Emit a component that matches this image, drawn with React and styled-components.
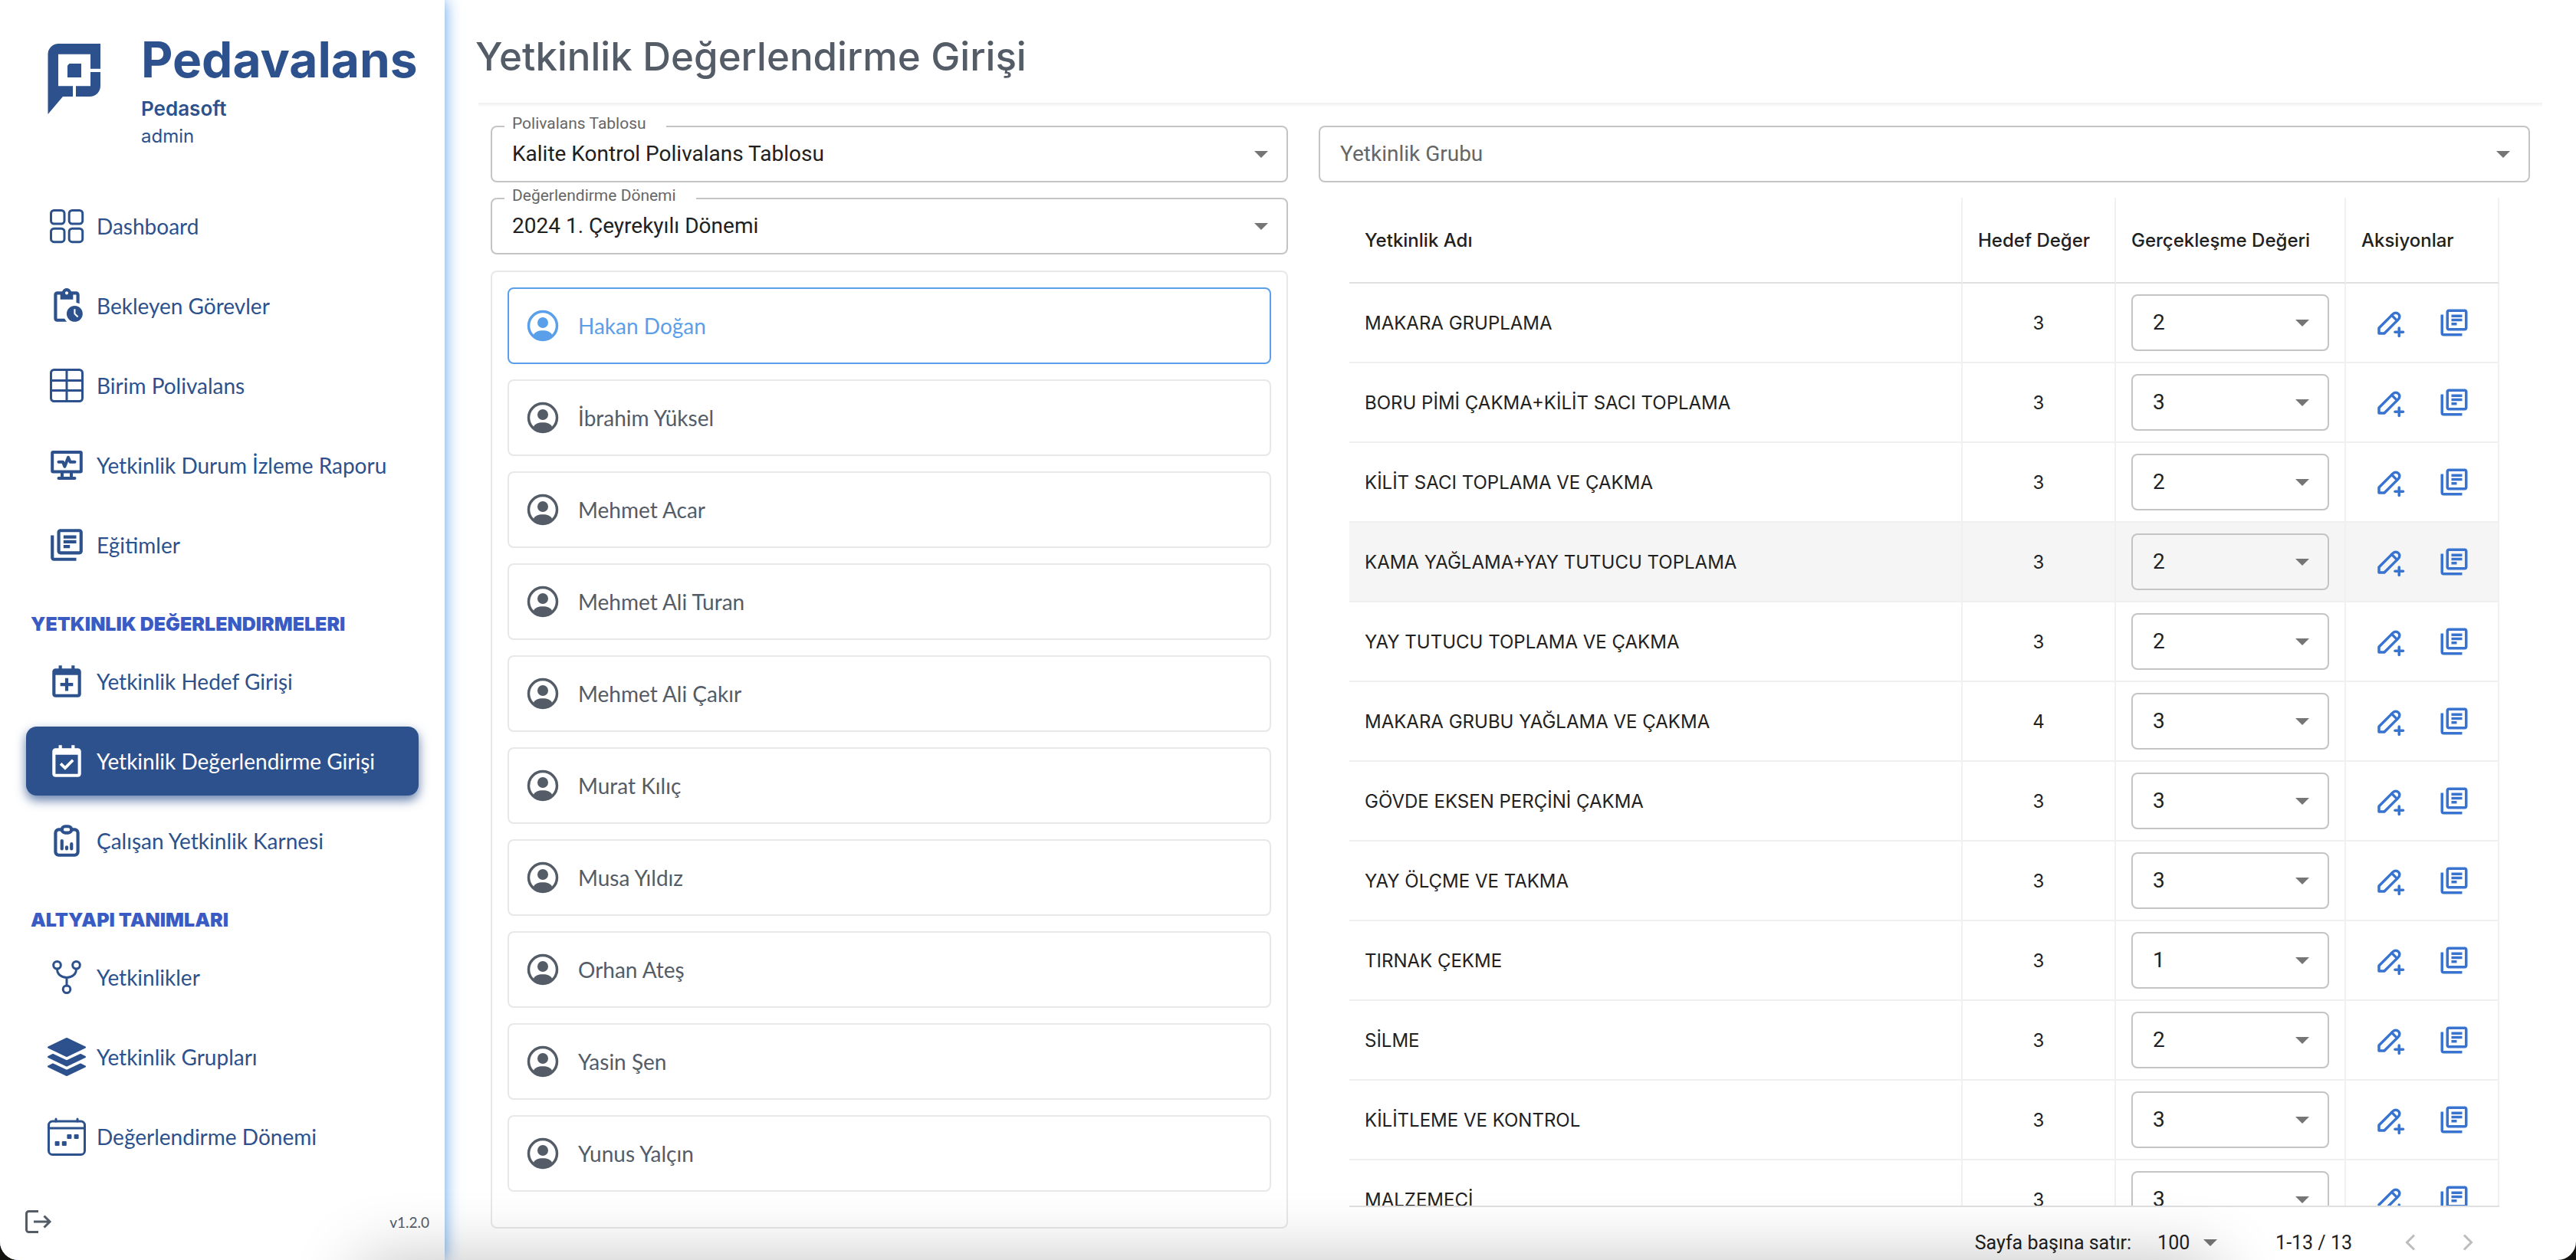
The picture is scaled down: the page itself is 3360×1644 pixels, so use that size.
import React, { useState } from "react";
import styled, { createGlobalStyle, css } from "styled-components";
import { MdPendingActions, MdOutlineLibraryBooks } from "react-icons/md";
import { TbPencilPlus, TbReportAnalytics } from "react-icons/tb";

const color = {
  navy: "#2c518d",
  indigo: "#3a5bc4",
  sky: "#5a9fe9",
  action: "#3874cf",
  slate: "#535c67",
  text: "#212121",
  muted: "#666666",
  outline: "#c4c4c4",
  line: "#e8e8e8",
  cell: "#f0f0f0",
  rule: "#e0e0e0",
};

const font = {
  display: '"Inter", "Liberation Sans", sans-serif',
  nav: '"Lato", "Liberation Sans", sans-serif',
  form: '"Roboto", "Liberation Sans", sans-serif',
};

const GlobalStyle = createGlobalStyle`
  *, *::before, *::after { box-sizing: border-box; }
  body { margin: 0; background: #15130f; }
  button, select { font: inherit; color: inherit; }
  h1, h2, p, ul { margin: 0; padding: 0; }
`;

/* ---------- shell ---------- */

const Shell = styled.div`
  position: relative;
  display: flex;
  height: 100vh;
  overflow: hidden;
  background: #ffffff;
  border-radius: 0 0 24px 24px;
`;

const DockShade = styled.div`
  position: absolute;
  left: 14%;
  right: 14%;
  bottom: -100px;
  height: 100px;
  z-index: 3;
  box-shadow: 0 0 88px rgba(0, 0, 0, 0.24);
  pointer-events: none;
`;

/* ---------- sidebar ---------- */

const Sidebar = styled.aside`
  flex: 0 0 580px;
  z-index: 2;
  display: flex;
  flex-direction: column;
  background: #ffffff;
  color: ${color.navy};
  box-shadow: 0 0 20px ${color.sky};
`;

const Brand = styled.header`
  display: flex;
  gap: 50px;
  height: 250px;
  padding: 40px 20px 0 62px;
  font-family: ${font.display};
`;

const Logo = styled.svg`
  flex: none;
  width: 72px;
  height: 96px;
  margin-top: 16px;
`;

const BrandName = styled.p`
  font-size: 64px;
  line-height: 76px;
  font-weight: 700;
`;

const Company = styled.p`
  margin-top: 8px;
  font-size: 26px;
  line-height: 36px;
  font-weight: 600;
`;

const Role = styled.p`
  font-size: 24px;
  line-height: 36px;
`;

const Nav = styled.nav`
  flex: 1;
  padding: 0 34px;
  font-family: ${font.nav};
`;

const NavList = styled.ul`
  display: flex;
  flex-direction: column;
  gap: 14px;
  list-style: none;
`;

const NavHeading = styled.h2`
  height: 88px;
  padding: 42px 0 0 6px;
  color: ${color.indigo};
  font-family: ${font.display};
  font-size: 25px;
  line-height: 32px;
  font-weight: 900;
  white-space: nowrap;
`;

const NavLink = styled.a`
  display: flex;
  align-items: center;
  gap: 14px;
  height: 90px;
  padding-left: 28px;
  border-radius: 14px;
  color: inherit;
  font-size: 28px;
  text-decoration: none;
  white-space: nowrap;

  svg {
    flex: none;
    width: 50px;
    height: 50px;
  }

  ${(p) =>
    p.$active &&
    css`
      background: ${color.navy};
      color: #ffffff;
      box-shadow: 0 6px 14px rgba(44, 81, 141, 0.75);
    `}
`;

const SidebarFooter = styled.footer`
  display: flex;
  align-items: center;
  justify-content: space-between;
  height: 100px;
  padding: 0 20px 0 32px;
  color: ${color.slate};
  font-family: ${font.nav};
  font-size: 19px;
`;

const IconButton = styled.button`
  display: grid;
  place-items: center;
  width: ${(p) => p.$width || 42}px;
  height: 42px;
  padding: 0;
  border: 0;
  background: none;
  color: ${(p) => p.$color || color.action};
  cursor: pointer;

  svg {
    display: block;
  }
`;

/* ---------- main ---------- */

const Main = styled.main`
  flex: 1;
  min-width: 0;
  display: flex;
  flex-direction: column;
`;

const Title = styled.h1`
  padding: 39px 40px 25px;
  color: ${color.slate};
  font-family: ${font.display};
  font-size: 51px;
  line-height: 70px;
  font-weight: 500;
`;

const Divider = styled.hr`
  flex: none;
  height: 6px;
  margin: 0 44px;
  border: 0;
  background: linear-gradient(#efefef, #ffffff);
`;

const Columns = styled.div`
  flex: 1;
  min-height: 0;
  display: flex;
  padding: 24px 40px 0;
`;

const Column = styled.section`
  flex: 0 0 ${(p) => p.$share}%;
  min-width: 0;
  display: flex;
  flex-direction: column;
  gap: 20px;
  padding: 0 20px;
`;

const Field = styled.div`
  position: relative;
  flex: none;
  display: grid;
  align-items: center;
  font-family: ${font.form};
  color: ${(p) => (p.$placeholder ? color.muted : color.text)};

  > select,
  > svg {
    grid-area: 1 / 1;
  }

  > svg {
    justify-self: end;
    margin-right: ${(p) => (p.$bare ? 0 : 26)}px;
    pointer-events: none;
  }
`;

const Select = styled.select`
  appearance: none;
  width: 100%;
  height: 74px;
  padding: 0 60px 2px 26px;
  border: 2px solid ${color.outline};
  border-radius: 8px;
  background: transparent;
  font-size: 28px;
`;

const BareSelect = styled.select`
  appearance: none;
  width: 78px;
  height: 40px;
  padding: 0;
  border: 0;
  background: transparent;
  font-size: 25px;
`;

const FloatingLabel = styled.label`
  position: absolute;
  top: -16px;
  left: 18px;
  padding: 0 26px 0 10px;
  background: #ffffff;
  color: ${color.muted};
  font-size: 21px;
  line-height: 26px;
`;

const People = styled.ul`
  flex: 1;
  min-height: 0;
  display: flex;
  flex-direction: column;
  gap: 20px;
  margin: 1px 0 41px;
  padding: 20px;
  border: 2px solid ${color.line};
  border-radius: 8px;
  list-style: none;
  overflow: hidden;
`;

const Person = styled.button`
  display: flex;
  align-items: center;
  gap: 22px;
  width: 100%;
  height: 100px;
  padding: 0 20px;
  border: 2px solid ${(p) => (p.$selected ? color.sky : color.line)};
  border-radius: 8px;
  background: #ffffff;
  color: ${(p) => (p.$selected ? color.sky : color.slate)};
  font-family: ${font.nav};
  font-size: 28px;
  text-align: left;
  cursor: pointer;
`;

/* ---------- table ---------- */

const GridArea = styled.div`
  flex: 1;
  min-height: 0;
  display: flex;
  flex-direction: column;
  padding: 0 40px;
`;

const TableScroll = styled.div`
  flex: 1;
  min-height: 0;
  overflow: hidden;
  border-bottom: 2px solid ${color.rule};
`;

const Table = styled.table`
  width: 100%;
  table-layout: fixed;
  border-collapse: separate;
  border-spacing: 0;
  color: ${color.text};
  font-family: ${font.display};
  font-size: 24px;
`;

const Col = styled.col`
  width: ${(p) => p.$width}px;
`;

const HeadCell = styled.th`
  height: 112px;
  padding: 0 20px;
  border-right: 2px solid ${color.cell};
  border-bottom: 2px solid ${color.rule};
  font-weight: 500;
  text-align: left;
  white-space: nowrap;
`;

const Row = styled.tr`
  background: ${(p) => (p.$hovered ? "#f5f5f5" : "transparent")};
`;

const Cell = styled.td`
  height: 104px;
  padding: 0 20px;
  border-right: 2px solid ${color.cell};
  border-bottom: 2px solid ${color.cell};
  text-align: ${(p) => (p.$center ? "center" : "left")};
`;

const Actions = styled.div`
  display: flex;
  justify-content: center;
  gap: 42px;
`;

const Pagination = styled.footer`
  flex: none;
  display: flex;
  align-items: center;
  justify-content: flex-end;
  height: 69px;
  padding: 23px 4px 0 0;
  color: ${color.text};
  font-family: ${font.form};
  font-size: 25px;
`;

const PageSizeLabel = styled.label`
  margin-right: 34px;
`;

const Range = styled.span`
  margin: 0 38px 0 76px;
`;

/* ---------- drawings ---------- */

const Arrow = () => (
  <svg width="18" height="9" viewBox="0 0 18 9" aria-hidden="true">
    <path d="M0 0h18L9 9z" fill="#757575" />
  </svg>
);

const Stroke50 = ({ children, width = 3 }) => (
  <svg viewBox="0 0 50 50" fill="none" stroke="currentColor" strokeWidth={width} strokeLinecap="round" strokeLinejoin="round" aria-hidden="true">
    {children}
  </svg>
);

const TilesIcon = () => (
  <Stroke50>
    <rect x="4.5" y="4.5" width="17.5" height="17.5" rx="4" />
    <rect x="28.2" y="4.5" width="17.5" height="17.5" rx="4" />
    <rect x="4.5" y="28.2" width="17.5" height="17.5" rx="4" />
    <rect x="28.2" y="28.2" width="17.5" height="17.5" rx="4" />
  </Stroke50>
);

const TableIcon = () => (
  <Stroke50>
    <rect x="4.5" y="4.5" width="41" height="41" rx="4" />
    <path d="M25 4.5v41M4.5 18.5h41M4.5 31.5h41" />
  </Stroke50>
);

const MonitorIcon = () => (
  <Stroke50 width={4}>
    <rect x="6.2" y="8" width="37.6" height="25.5" rx="1" />
    <path d="M19 35v6M31 35v6M14.5 42h21M14.5 20.7h5.5l2.4 6 4.6-12 2.5 6h6" />
  </Stroke50>
);

const CalendarIcon = ({ children }) => (
  <svg viewBox="0 0 24 24" fill="currentColor" aria-hidden="true">
    <path
      fillRule="evenodd"
      d="M19 4h-2V2h-2v2H9V2H7v2H5c-1.1 0-2 .9-2 2v14c0 1.1.9 2 2 2h14c1.1 0 2-.9 2-2V6c0-1.1-.9-2-2-2zM19 20H5V8h14z"
    />
    {children}
  </svg>
);

const CalendarPlusIcon = () => (
  <CalendarIcon>
    <path d="M13 10h-2v3H8v2h3v3h2v-3h3v-2h-3z" />
  </CalendarIcon>
);

const CalendarCheckIcon = () => (
  <CalendarIcon>
    <path d="M8.2 13.6l2.8 2.8 4.9-5" fill="none" stroke="currentColor" strokeWidth="1.8" />
  </CalendarIcon>
);

const ForkIcon = () => (
  <Stroke50>
    <circle cx="12.5" cy="9.3" r="4.8" />
    <circle cx="37.5" cy="9.3" r="4.8" />
    <circle cx="25" cy="40.7" r="4.8" />
    <path d="M12.5 14.5C12.5 21 18 25.5 25 25.5S37.5 21 37.5 14.5M25 25.5V36" />
  </Stroke50>
);

const LayersIcon = () => (
  <svg viewBox="0 0 50 50" fill="currentColor" stroke="currentColor" strokeWidth="2" strokeLinejoin="round" aria-hidden="true">
    <path d="M25 1l24 11.5L25 24 1 12.5z" />
    <path d="M1 25l6-3 18 8.5L43 22l6 3-24 11.5z" />
    <path d="M1 37.5l6-3L25 43l18-8.5 6 3L25 49z" />
  </svg>
);

const PeriodIcon = () => (
  <Stroke50>
    <rect x="1.5" y="5" width="47" height="43.5" rx="5" />
    <path d="M1.5 14h47M11 2v3M39 2v3" />
    <g fill="currentColor" stroke="none">
      <rect x="25.4" y="22" width="6" height="6" rx="1" />
      <rect x="34.6" y="22" width="6" height="6" rx="1" />
      <rect x="9.6" y="31" width="6" height="6" rx="1" />
      <rect x="18.8" y="31" width="6" height="6" rx="1" />
    </g>
  </Stroke50>
);

const LogoutIcon = () => (
  <svg width="36" height="36" viewBox="0 0 36 36" fill="none" stroke="currentColor" strokeWidth="3" aria-hidden="true">
    <path d="M18 4.5H5.5a3 3 0 0 0-3 3v21a3 3 0 0 0 3 3H18M12 18h20M25.5 10.5L33 18l-7.5 7.5" />
  </svg>
);

const PersonIcon = () => (
  <svg width="48" height="48" viewBox="0 0 48 48" fill="currentColor" aria-hidden="true">
    <circle cx="24" cy="24" r="18.5" fill="none" stroke="currentColor" strokeWidth="3.5" />
    <circle cx="24" cy="20" r="7" />
    <path d="M11.5 37c1.5-5 6.5-6.7 12.5-6.7S35 32 36.5 37a18 18 0 0 1-25 0z" />
  </svg>
);

const Chevron = ({ right }) => (
  <svg width="14" height="22" viewBox="0 0 14 22" fill="none" stroke="currentColor" strokeWidth="3" aria-hidden="true">
    <path d={right ? "M2 1.5L11.5 11 2 20.5" : "M12 1.5L2.5 11 12 20.5"} />
  </svg>
);

const BrandLogo = () => (
  <Logo viewBox="0 0 72 96" fill="currentColor" aria-hidden="true">
    <path d="M.5 93V15a14 14 0 0 1 14-14H69v32.7H56v-19H14v41.6h19V70H20z" />
    <path d="M69 38v18a14 14 0 0 1-14 14H37V56.3h19V38z" />
    <path d="M28.5 27H44v18H26V29.5z" />
  </Logo>
);

/* ---------- data ---------- */

const navSections = [
  {
    items: [
      { label: "Dashboard", Icon: TilesIcon },
      { label: "Bekleyen Görevler", Icon: MdPendingActions },
      { label: "Birim Polivalans", Icon: TableIcon },
      { label: "Yetkinlik Durum İzleme Raporu", Icon: MonitorIcon },
      { label: "Eğitimler", Icon: MdOutlineLibraryBooks },
    ],
  },
  {
    heading: "YETKINLIK DEĞERLENDIRMELERI",
    items: [
      { label: "Yetkinlik Hedef Girişi", Icon: CalendarPlusIcon },
      { label: "Yetkinlik Değerlendirme Girişi", Icon: CalendarCheckIcon, active: true },
      { label: "Çalışan Yetkinlik Karnesi", Icon: TbReportAnalytics },
    ],
  },
  {
    heading: "ALTYAPI TANIMLARI",
    items: [
      { label: "Yetkinlikler", Icon: ForkIcon },
      { label: "Yetkinlik Grupları", Icon: LayersIcon },
      { label: "Değerlendirme Dönemi", Icon: PeriodIcon },
    ],
  },
];

const people = [
  "Hakan Doğan",
  "İbrahim Yüksel",
  "Mehmet Acar",
  "Mehmet Ali Turan",
  "Mehmet Ali Çakır",
  "Murat Kılıç",
  "Musa Yıldız",
  "Orhan Ateş",
  "Yasin Şen",
  "Yunus Yalçın",
];

const skills = [
  ["MAKARA GRUPLAMA", 3, 2],
  ["BORU PİMİ ÇAKMA+KİLİT SACI TOPLAMA", 3, 3],
  ["KİLİT SACI TOPLAMA VE ÇAKMA", 3, 2],
  ["KAMA YAĞLAMA+YAY TUTUCU TOPLAMA", 3, 2],
  ["YAY TUTUCU TOPLAMA VE ÇAKMA", 3, 2],
  ["MAKARA GRUBU YAĞLAMA VE ÇAKMA", 4, 3],
  ["GÖVDE EKSEN PERÇİNİ ÇAKMA", 3, 3],
  ["YAY ÖLÇME VE TAKMA", 3, 3],
  ["TIRNAK ÇEKME", 3, 1],
  ["SİLME", 3, 2],
  ["KİLİTLEME VE KONTROL", 3, 3],
  ["MALZEMECİ", 3, 3],
];

const hoveredRow = 3;

/* ---------- page ---------- */

const LabelledSelect = ({ id, label, value }) => (
  <Field>
    <Select id={id} defaultValue={value}>
      <option>{value}</option>
    </Select>
    <Arrow />
    <FloatingLabel htmlFor={id}>{label}</FloatingLabel>
  </Field>
);

export default function App() {
  const [selected, setSelected] = useState(people[0]);

  return (
    <>
      <GlobalStyle />
      <Shell>
        <Sidebar>
          <Brand>
            <BrandLogo />
            <div>
              <BrandName>Pedavalans</BrandName>
              <Company>Pedasoft</Company>
              <Role>admin</Role>
            </div>
          </Brand>
          <Nav>
            {navSections.map(({ heading, items }) => (
              <React.Fragment key={items[0].label}>
                {heading && <NavHeading>{heading}</NavHeading>}
                <NavList>
                  {items.map(({ label, Icon, active }) => (
                    <li key={label}>
                      <NavLink href="#" $active={active} aria-current={active ? "page" : undefined}>
                        <Icon />
                        {label}
                      </NavLink>
                    </li>
                  ))}
                </NavList>
              </React.Fragment>
            ))}
          </Nav>
          <SidebarFooter>
            <IconButton $width={36} $color={color.slate} aria-label="Çıkış">
              <LogoutIcon />
            </IconButton>
            <span>v1.2.0</span>
          </SidebarFooter>
        </Sidebar>

        <Main>
          <Title>Yetkinlik Değerlendirme Girişi</Title>
          <Divider />
          <Columns>
            <Column $share={40}>
              <LabelledSelect id="table" label="Polivalans Tablosu" value="Kalite Kontrol Polivalans Tablosu" />
              <LabelledSelect id="period" label="Değerlendirme Dönemi" value="2024 1. Çeyrekyılı Dönemi" />
              <People>
                {people.map((name) => (
                  <li key={name}>
                    <Person $selected={name === selected} onClick={() => setSelected(name)}>
                      <PersonIcon />
                      {name}
                    </Person>
                  </li>
                ))}
              </People>
            </Column>

            <Column $share={60}>
              <Field $placeholder>
                <Select aria-label="Yetkinlik Grubu">
                  <option>Yetkinlik Grubu</option>
                </Select>
                <Arrow />
              </Field>
              <GridArea>
                <TableScroll>
                  <Table>
                    <colgroup>
                      <col />
                      <Col $width={200} />
                      <Col $width={300} />
                      <Col $width={200} />
                    </colgroup>
                    <thead>
                      <tr>
                        <HeadCell>Yetkinlik Adı</HeadCell>
                        <HeadCell>Hedef Değer</HeadCell>
                        <HeadCell>Gerçekleşme Değeri</HeadCell>
                        <HeadCell>Aksiyonlar</HeadCell>
                      </tr>
                    </thead>
                    <tbody>
                      {skills.map(([name, target, actual], i) => (
                        <Row key={name} $hovered={i === hoveredRow}>
                          <Cell>{name}</Cell>
                          <Cell $center>{target}</Cell>
                          <Cell>
                            <Field>
                              <Select aria-label={name} defaultValue={actual}>
                                {[1, 2, 3, 4].map((n) => (
                                  <option key={n}>{n}</option>
                                ))}
                              </Select>
                              <Arrow />
                            </Field>
                          </Cell>
                          <Cell>
                            <Actions>
                              <IconButton aria-label="Ekle">
                                <TbPencilPlus size={42} />
                              </IconButton>
                              <IconButton aria-label="Eğitimler">
                                <MdOutlineLibraryBooks size={42} />
                              </IconButton>
                            </Actions>
                          </Cell>
                        </Row>
                      ))}
                    </tbody>
                  </Table>
                </TableScroll>
                <Pagination>
                  <PageSizeLabel htmlFor="page-size">Sayfa başına satır:</PageSizeLabel>
                  <Field $bare>
                    <BareSelect id="page-size" defaultValue="100">
                      <option>100</option>
                    </BareSelect>
                    <Arrow />
                  </Field>
                  <Range>1-13 / 13</Range>
                  <IconButton $width={75} $color="#bdbdbd" aria-label="Önceki sayfa">
                    <Chevron />
                  </IconButton>
                  <IconButton $width={75} $color="#bdbdbd" aria-label="Sonraki sayfa">
                    <Chevron right />
                  </IconButton>
                </Pagination>
              </GridArea>
            </Column>
          </Columns>
        </Main>
        <DockShade />
      </Shell>
    </>
  );
}
